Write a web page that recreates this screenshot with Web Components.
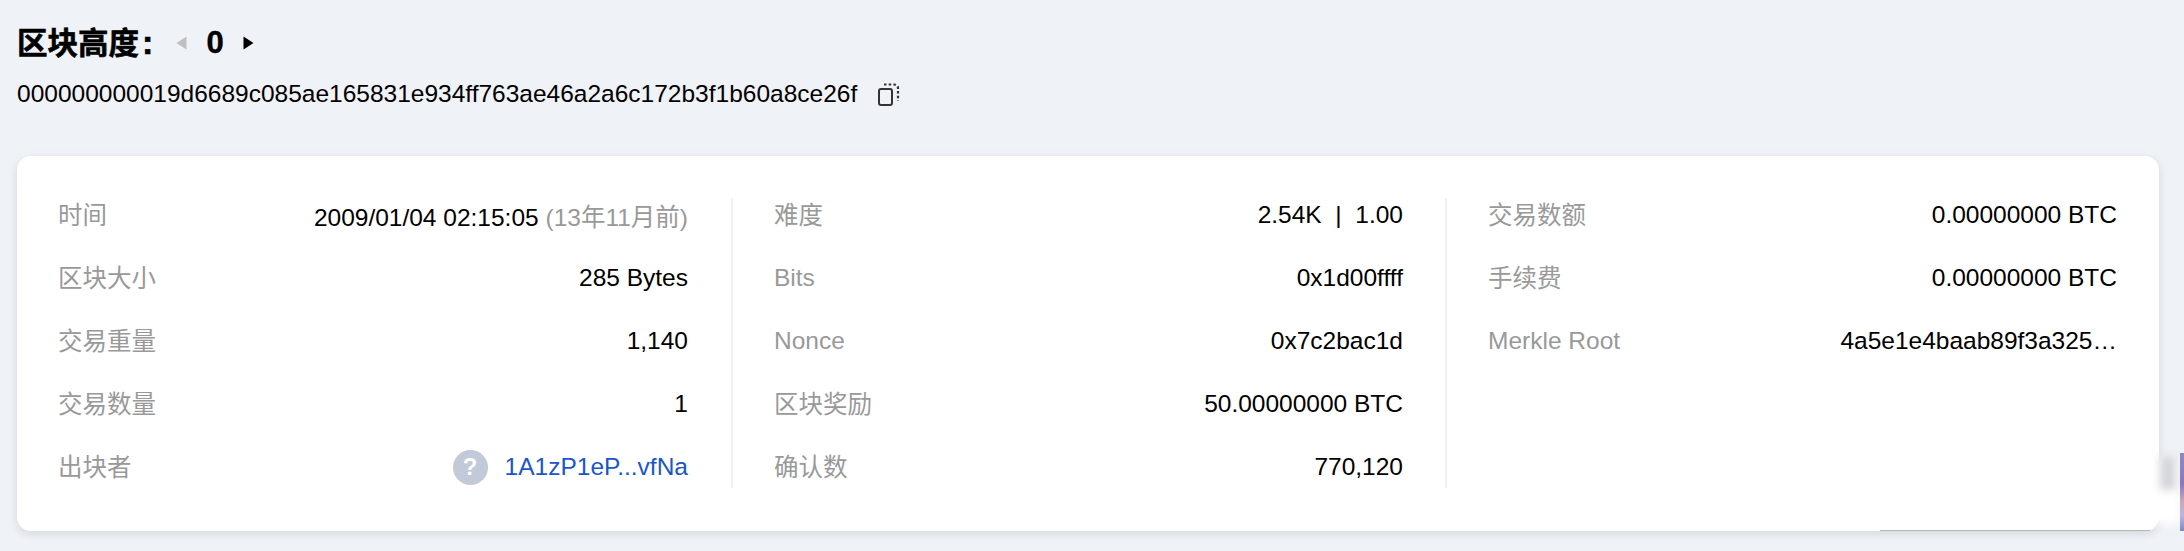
<!DOCTYPE html>
<html lang="zh">
<head>
<meta charset="utf-8">
<title>区块高度</title>
<style>
    html, body {
        margin: 0;
        height: 100%;
        background: #eff2f6;
        overflow: hidden;
    }
</style>
</head>
<body>
<block-page>
    <block-header slot="header" height="0" hash="000000000019d6689c085ae165831e934ff763ae46a2a6c172b3f1b60a8ce26f"></block-header>
    <info-card>
        <info-col>
            <info-row label="时间">2009/01/04 02:15:05 <span style="color:#999">(13年11月前)</span></info-row>
            <info-row label="区块大小">285 Bytes</info-row>
            <info-row label="交易重量">1,140</info-row>
            <info-row label="交易数量">1</info-row>
            <info-row label="出块者"><miner-link>1A1zP1eP...vfNa</miner-link></info-row>
        </info-col>
        <info-col>
            <info-row label="难度">2.54K&nbsp; |&nbsp; 1.00</info-row>
            <info-row label="Bits">0x1d00ffff</info-row>
            <info-row label="Nonce">0x7c2bac1d</info-row>
            <info-row label="区块奖励">50.00000000 BTC</info-row>
            <info-row label="确认数">770,120</info-row>
        </info-col>
        <info-col>
            <info-row label="交易数额">0.00000000 BTC</info-row>
            <info-row label="手续费">0.00000000 BTC</info-row>
            <info-row label="Merkle Root">4a5e1e4baab89f3a325…</info-row>
        </info-col>
    </info-card>
</block-page>

<script>
const FONT = '"Liberation Sans", "Noto Sans CJK SC", sans-serif';

class BlockPage extends HTMLElement {
    constructor() {
        super();
        this.attachShadow({mode: 'open'});
        this.shadowRoot.innerHTML = `
            <style>
                :host {
                    display: block;
                    position: relative;
                    height: 551px;
                    padding: 0 25px 0 17px;
                    box-sizing: border-box;
                    overflow: hidden;
                    font-family: ${FONT};
                    color: #000;
                }
                /* leftover smudge in the lower right corner */
                .patch, .grey, .strip, .edge {
                    position: absolute;
                    pointer-events: none;
                }
                .patch {
                    left: 2150px;
                    top: 458px;
                    width: 30px;
                    height: 66px;
                    background: #fff;
                    filter: blur(5px);
                }
                .grey {
                    left: 2160px;
                    top: 456px;
                    width: 16px;
                    height: 34px;
                    background: #d4d5da;
                    filter: blur(4px);
                }
                .strip {
                    left: 2180px;
                    top: 453px;
                    width: 4px;
                    height: 78px;
                    background: linear-gradient(#8f86c8 0%, #8a78bc 40%, #c9a6bc 62%, #b9b8dc 80%, #7f86c4 100%);
                }
                .edge {
                    left: 1880px;
                    top: 530px;
                    width: 270px;
                    height: 1px;
                    background: #b4b9b4;
                    filter: blur(0.5px);
                }
            </style>
            <slot name="header"></slot>
            <slot></slot>
            <div class="patch"></div>
            <div class="grey"></div>
            <div class="edge"></div>
            <div class="strip"></div>
        `;
    }
}

class BlockHeader extends HTMLElement {
    constructor() {
        super();
        this.attachShadow({mode: 'open'});
        this.shadowRoot.innerHTML = `
            <style>
                :host {
                    display: block;
                    height: 156px;
                    padding-top: 24px;
                    box-sizing: border-box;
                }
                .title {
                    display: flex;
                    align-items: center;
                    height: 38px;
                    font-size: 31px;
                    font-weight: 700;
                }
                .title h1 {
                    margin: -5px 0 0;
                    width: 159px;
                    font: inherit;
                    font-size: 30.5px;
                    -webkit-text-stroke: 0.6px #000;
                }
                .title h1 span {
                    margin-left: 3px;
                    font-size: 34px;
                }
                .height {
                    width: 56px;
                    text-align: center;
                    -webkit-text-stroke: 0.4px #000;
                }
                .arrow {
                    display: block;
                    width: 11px;
                    height: 14px;
                }
                .hash {
                    display: flex;
                    align-items: center;
                    margin-top: 15px;
                    height: 34px;
                    font-size: 24.5px;
                    font-weight: 400;
                }
                svg.copy {
                    margin-left: 20px;
                    margin-top: -1px;
                    width: 24px;
                    height: 26px;
                }
            </style>
            <div class="title">
                <h1>区块高度<span>:</span></h1>
                <svg class="arrow" viewBox="0 0 11 14"><path d="M10.5 0.5V13.5L0.5 7Z" fill="#bdbfc2"/></svg>
                <span class="height" id="height"></span>
                <svg class="arrow" viewBox="0 0 11 14"><path d="M0.5 0.5V13.5L10.5 7Z" fill="#000"/></svg>
            </div>
            <div class="hash">
                <span id="hash"></span>
                <svg class="copy" viewBox="0 0 24 26" fill="none" stroke="#333">
                    <rect x="2" y="8" width="13" height="16" rx="2" stroke-width="2"/>
                    <path d="M7 3.500H17C19 3.500 21 5 21 7V20" stroke-width="2.200" stroke-dasharray="2.500 2.200"/>
                </svg>
            </div>
        `;
    }

    connectedCallback() {
        this.shadowRoot.querySelector('#height').textContent = this.getAttribute('height');
        this.shadowRoot.querySelector('#hash').textContent = this.getAttribute('hash');
    }
}

class InfoCard extends HTMLElement {
    constructor() {
        super();
        this.attachShadow({mode: 'open'});
        this.shadowRoot.innerHTML = `
            <style>
                :host {
                    display: grid;
                    grid-template-columns: repeat(3, 1fr);
                    height: 375px;
                    padding: 42px 0 43px;
                    box-sizing: border-box;
                    background: #fff;
                    border-radius: 14px;
                    box-shadow: 0 3px 10px rgba(30, 50, 80, 0.13);
                }
            </style>
            <slot></slot>
        `;
    }
}

class InfoCol extends HTMLElement {
    constructor() {
        super();
        this.attachShadow({mode: 'open'});
        this.shadowRoot.innerHTML = `
            <style>
                :host {
                    display: flex;
                    flex-direction: column;
                    gap: 29px;
                    padding: 0 42px 0 41px;
                    border-left: 2px solid #eff0f2;
                    box-sizing: border-box;
                    min-width: 0;
                }
                :host(:first-child) {
                    border-left: 0;
                    padding: 0 43px 0 41px;
                }
            </style>
            <slot></slot>
        `;
    }
}

class InfoRow extends HTMLElement {
    constructor() {
        super();
        this.attachShadow({mode: 'open'});
        this.shadowRoot.innerHTML = `
            <style>
                :host {
                    display: flex;
                    justify-content: space-between;
                    align-items: center;
                    height: 34px;
                    font-size: 24.5px;
                    white-space: nowrap;
                }
                .label {
                    color: #999;
                }
                .label.cjk {
                    margin-top: -3px;
                }
            </style>
            <span class="label" id="label"></span>
            <span class="value"><slot></slot></span>
        `;
    }

    connectedCallback() {
        const label = this.shadowRoot.querySelector('#label');
        const text = this.getAttribute('label');
        label.textContent = text;
        label.classList.toggle('cjk', /[^\x00-\x7f]/.test(text));
    }
}

class MinerLink extends HTMLElement {
    constructor() {
        super();
        this.attachShadow({mode: 'open'});
        this.shadowRoot.innerHTML = `
            <style>
                :host {
                    display: inline-flex;
                    align-items: center;
                    gap: 17px;
                    color: #1a56c8;
                    vertical-align: middle;
                }
                .avatar {
                    display: flex;
                    align-items: center;
                    justify-content: center;
                    width: 35px;
                    height: 35px;
                    border-radius: 50%;
                    background: #c2c9d9;
                    color: #fff;
                    font-size: 24px;
                    font-weight: 700;
                }
            </style>
            <span class="avatar">?</span>
            <slot></slot>
        `;
    }
}

customElements.define('block-page', BlockPage);
customElements.define('block-header', BlockHeader);
customElements.define('info-card', InfoCard);
customElements.define('info-col', InfoCol);
customElements.define('info-row', InfoRow);
customElements.define('miner-link', MinerLink);
</script>
</body>
</html>
